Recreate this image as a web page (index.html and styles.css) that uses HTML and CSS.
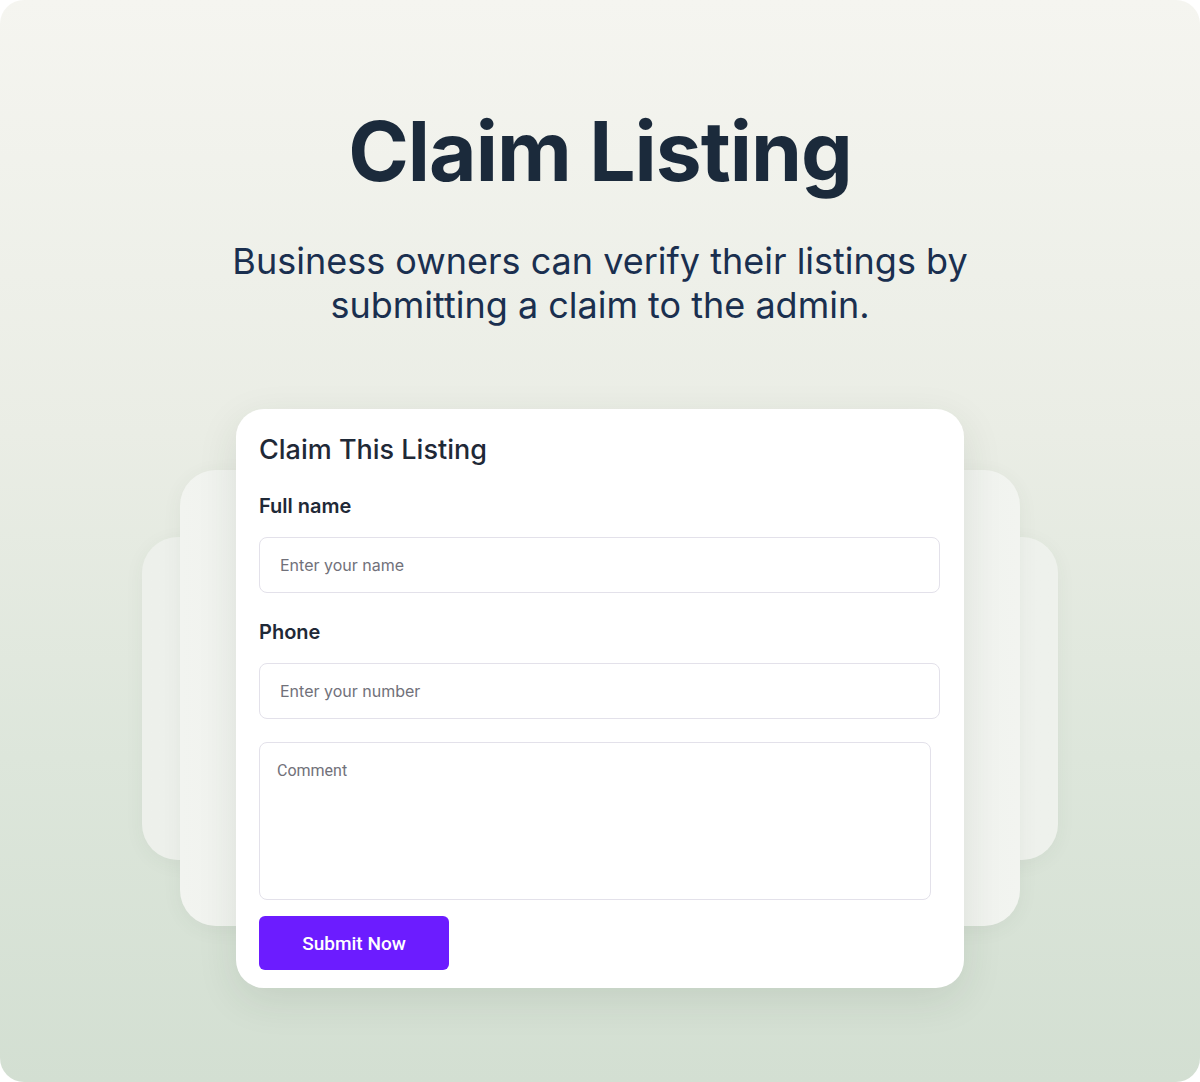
FILE: index.html
```html
<!DOCTYPE html>
<html lang="en">
<head>
    <meta charset="UTF-8">
    <meta name="viewport" content="width=device-width, initial-scale=1.0">
    <title>Claim Listing</title>
    <link rel="stylesheet" href="styles.css">
</head>
<body>
    <div class="frame">
        <h1 class="title">Claim Listing</h1>
        <p class="subtitle">Business owners can verify their listings by<br>submitting a claim to the admin.</p>

        <div class="stack">
            <div class="layer layerback"></div>
            <div class="layer layermid"></div>
            <form class="card">
                <div class="cardtitle">Claim This Listing</div>
                <label class="label" for="fullname">Full name</label>
                <input class="field" type="text" id="fullname" placeholder="Enter your name">
                <label class="label" for="phone">Phone</label>
                <input class="field" type="text" id="phone" placeholder="Enter your number">
                <textarea class="comment" placeholder="Comment"></textarea>
                <button type="button" class="submitbtn">Submit Now</button>
            </form>
        </div>
    </div> <!-- End frame -->
</body>
</html>
```

FILE: styles.css
```css
body {
    margin: 0;
    background: #ffffff;
    font-family: Inter, "Noto Sans", sans-serif;
}

.frame {
    height: 1082px;
    border-radius: 24px;
    background: linear-gradient(180deg, #f5f5f0 0%, #eaede5 40%, #dde6db 70%, #d3dfd2 100%);
    text-align: center;
    overflow: hidden;
    padding-top: 97px;
    box-sizing: border-box;
}

.title {
    margin: 0;
    font-size: 82px;
    font-weight: 700;
    line-height: 110px;
    letter-spacing: -1px;
    color: #1b2a3b;
}

.subtitle {
    margin: 32px 0 0;
    font-size: 36px;
    line-height: 44px;
    color: #1a2f4f;
}

.stack {
    position: relative;
    width: 728px;
    margin: 82px auto 0;
}

.layer {
    position: absolute;
    border-radius: 36px;
}

.layerback {
    left: -94px;
    right: -94px;
    top: 128px;
    bottom: 128px;
    background: linear-gradient(90deg, #edf0eb, #eef1ec);
    box-shadow: 0 4px 20px rgba(60, 80, 60, 0.05);
}

.layermid {
    left: -56px;
    right: -56px;
    top: 61px;
    bottom: 62px;
    background: linear-gradient(90deg, #f2f4f0, #eaeee8 30%, #eaeee8 70%, #f2f4f0);
    box-shadow: 0 4px 20px rgba(60, 80, 60, 0.06);
}

.card {
    position: relative;
    display: flex;
    flex-direction: column;
    align-items: flex-start;
    background: #ffffff;
    border-radius: 28px;
    padding: 24px 24px 18px 23px;
    box-shadow: 0 12px 40px rgba(40, 60, 40, 0.10);
    text-align: left;
}

.cardtitle {
    font-size: 27px;
    font-weight: 500;
    color: #1f2937;
    line-height: 34px;
}

.label {
    margin-top: 27px;
    font-size: 20px;
    font-weight: 600;
    color: #1f2937;
    line-height: 24px;
}

.field {
    margin-top: 19px;
    width: 100%;
    height: 56px;
    box-sizing: border-box;
    border: 1px solid #e3e1ea;
    border-radius: 8px;
    padding: 0 20px;
    font-family: Inter, sans-serif;
    font-size: 16px;
    color: #1f2937;
}

.field::placeholder {
    color: #71717a;
}

.comment {
    margin-top: 23px;
    width: 672px;
    height: 158px;
    box-sizing: border-box;
    border: 1px solid #e3e1ea;
    border-radius: 8px;
    padding: 18px 17px;
    font-family: Roboto, sans-serif;
    font-size: 16px;
    resize: none;
}

.comment::placeholder {
    color: #71717a;
}

.submitbtn {
    margin-top: 16px;
    width: 190px;
    height: 54px;
    border: none;
    border-radius: 6px;
    background: #6c1cff;
    color: #ffffff;
    font-family: Roboto, sans-serif;
    font-size: 19px;
    font-weight: 500;
}
```
